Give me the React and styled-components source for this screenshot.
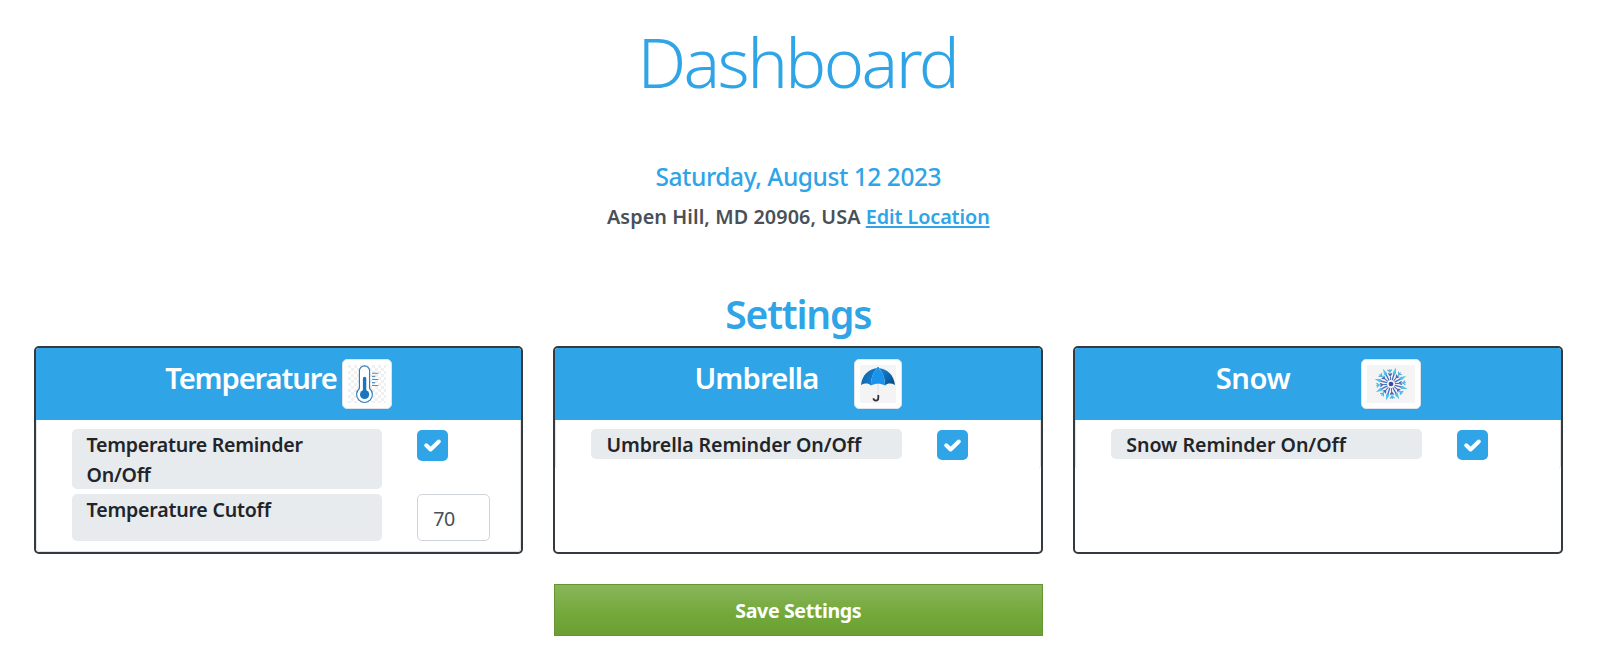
import React, { useState } from "react";
import styled, { createGlobalStyle } from "styled-components";

const blue = "#2fa4e7";

const GlobalStyle = createGlobalStyle`
  *, *::before, *::after { box-sizing: border-box; }
  body {
    margin: 0;
    background: #fff;
    color: #212529;
    font-family: "Noto Sans", "Open Sans", sans-serif;
    overflow: hidden;
  }
`;

const Page = styled.main`
  padding: 20px 58px 0 33.6px;
`;

const PageHeader = styled.header`
  display: flex;
  flex-direction: column;
  align-items: center;
`;

const Title = styled.h1`
  margin: 0 2px 58px 0;
  color: ${blue};
  font-size: 68.5px;
  font-weight: 300;
  line-height: 84px;
  letter-spacing: -2.6px;
`;

const DateLine = styled.h4`
  margin: 0 0 10px;
  color: ${blue};
  font-size: 24.5px;
  font-weight: 520;
  line-height: 30px;
  letter-spacing: -0.45px;
`;

const Location = styled.p`
  margin: 0 0 58px;
  color: #495057;
  font-size: 19.8px;
  font-weight: 650;
  line-height: 30px;
  letter-spacing: 0.09px;
`;

const EditLink = styled.a`
  color: ${blue};
  letter-spacing: -0.1px;
  text-decoration: underline;
  text-decoration-thickness: 2px;
  text-underline-offset: 2px;
`;

const SectionTitle = styled.h2`
  margin: 0 0 8px;
  color: ${blue};
  font-size: 39px;
  font-weight: 570;
  line-height: 48px;
  letter-spacing: -1.2px;
`;

const CardGrid = styled.section`
  display: grid;
  grid-template-columns: repeat(3, 1fr);
  gap: 30px;
`;

const Card = styled.article`
  height: 208px;
  border: 2px solid #343a40;
  border-radius: 5px;
  overflow: hidden;
`;

const CardHeader = styled.header`
  display: flex;
  align-items: flex-start;
  height: 72px;
  padding: 11px 0 0 ${(p) => p.$inset}px;
  background: ${blue};
`;

const CardTitle = styled.h3`
  width: ${(p) => p.$width}px;
  margin: 1px 0 0;
  color: #fff;
  font-size: 29.2px;
  font-weight: 600;
  line-height: 37px;
  letter-spacing: ${(p) => p.$tracking}px;
  white-space: nowrap;
`;

const Thumbnail = styled.figure`
  margin: 0;
  padding: 5px;
  border: 1px solid #dee2e6;
  border-radius: 5px;
  background: #fff;

  svg { display: block; }
`;

const CardBody = styled.div`
  display: grid;
  row-gap: 5px;
  padding: 9px 0 ${(p) => (p.$tall ? 10 : 9)}px 35px;
  border: 1px solid #e3e5e7;
  border-top: 0;
  border-bottom-color: ${(p) => (p.$tall ? "#dfe1e3" : "#fff")};
  border-radius: 0 0 5px 5px;
`;

const SettingRow = styled.div`
  display: grid;
  grid-template-columns: 310.4px auto;
  justify-content: start;
  column-gap: 35.2px;
`;

const Label = styled.label`
  padding: 1px 14px 0 15px;
  height: ${(p) => p.$height}px;
  border-radius: 5px;
  background: #e7ebee;
  font-size: 19.6px;
  font-weight: 650;
  line-height: 30px;
  letter-spacing: ${(p) => p.$tracking}px;
`;

const CheckBox = styled.button`
  display: grid;
  place-items: center;
  width: 31px;
  height: ${(p) => p.$height}px;
  margin-top: 1px;
  padding: 0;
  border: 0;
  border-radius: 5px;
  background: ${blue};
`;

const NumberInput = styled.input`
  width: 73px;
  height: 47px;
  padding: 1px 15px 0;
  border: 1px solid #ced4da;
  border-radius: 5px;
  color: #495057;
  font: 400 19.6px "Noto Sans", sans-serif;
  letter-spacing: -0.4px;
`;

const Actions = styled.footer`
  display: flex;
  justify-content: center;
  margin-top: 30px;
`;

const SaveButton = styled.button`
  width: 489px;
  height: 52px;
  padding: 1px 0 0;
  border: 1px solid #669533;
  background: linear-gradient(#88b65a, #73a839 60%, #6a9e35);
  color: #fff;
  font: 700 19.6px "Noto Sans", sans-serif;
  letter-spacing: -0.38px;
`;

function Thermometer() {
  return (
    <svg width="38" height="38" viewBox="0 0 38 38">
      <defs>
        <pattern id="checks" width="6" height="6" patternUnits="userSpaceOnUse">
          <path d="M0 0h3v3H0zM3 3h3v3H3z" fill="#f0f0f0" />
        </pattern>
      </defs>
      <rect width="38" height="38" fill="url(#checks)" />
      <path
        d="M11.4 23.5V6a5.1 5.1 0 0 1 10.2 0v17.5a7.9 7.9 0 1 1-10.2 0z"
        fill="#fff" stroke="#2b79b5" strokeWidth="1.1"
      />
      <path d="M14.9 26V13.5a1.7 1.7 0 0 1 3.4 0V26z" fill="#1c75bc" />
      <circle cx="16.6" cy="29.5" r="4.6" fill="#1c75bc" />
      <path
        d="M24 8.3h6.2M24 11.4h3.2M24 14.5h6.2M24 17.6h3.2M24 20.5h6.2"
        stroke="#4d91c6" strokeWidth="1.1"
      />
    </svg>
  );
}

function UmbrellaPicture() {
  return (
    <svg width="36" height="38" viewBox="0 0 36 38">
      <defs>
        <linearGradient id="canopy" x1="0" y1="0" x2="1" y2="0.5">
          <stop offset="0" stopColor="#0c5c9c" />
          <stop offset="1" stopColor="#1683d6" />
        </linearGradient>
        <linearGradient id="canopySide" x1="0" y1="0" x2="1" y2="0.6">
          <stop offset="0" stopColor="#1b8ce0" />
          <stop offset="1" stopColor="#07518f" />
        </linearGradient>
      </defs>
      <rect width="36" height="38" fill="#f4f4f4" />
      <path d="M18 2v3" stroke="#4b5a66" strokeWidth="1.4" />
      <path d="M18 19v12" stroke="#dcdfe2" strokeWidth="1" />
      <path d="M1 20C2 10 9 3.5 18 3c-4.5 3.5-7 9-7 17.5C8 18 5.5 18 1 20z" fill="url(#canopy)" />
      <path d="M35 20C34 10 27 3.5 18 3c4.5 3.5 7 9 7 17.5C28 18 30.5 18 35 20z" fill="url(#canopySide)" />
      <path d="M11 20.5C11 12 13.5 6.5 18 3c4.5 3.5 7 9 7 17.5C20.5 18 15.5 18 11 20.5z" fill="#1993ec" />
      <path d="M18.3 30v3c0 3.4-4.8 3.4-4.8.2" fill="none" stroke="#303238" strokeWidth="1.8" />
    </svg>
  );
}

const longArms = [17, 62, 107, 152, 197, 242, 287, 332];
const shortArms = [-5, 40, 85, 130, 175, 220, 265, 310];

function SnowflakePicture() {
  return (
    <svg width="48" height="38" viewBox="0 0 48 38">
      <rect width="48" height="38" fill="#f4f4f4" />
      <g transform="translate(24 19)" fill="none" strokeLinecap="round">
        {longArms.map((angle) => (
          <g key={angle} transform={`rotate(${angle})`}>
            <path d="M-1.7-11.5L0-17.2 1.7-11.5 0-9z" fill="#55c0e8" />
            <path d="M0-4.5V-10" stroke="#456fc0" strokeWidth="1.3" />
          </g>
        ))}
        {shortArms.map((angle) => (
          <g key={angle} transform={`rotate(${angle})`}>
            <path d="M0-10V-14.5M-1.9-14L0-12 1.9-14" stroke="#55b4e0" strokeWidth="1.2" />
            <path d="M0-4.5V-10M-1.6-10.5L0-8 1.6-10.5" stroke="#4966b8" strokeWidth="1" />
          </g>
        ))}
        <circle r="2.3" fill="#3c45a0" />
      </g>
    </svg>
  );
}

function Toggle({ name, height = 31 }) {
  const [on, setOn] = useState(true);
  return (
    <CheckBox
      type="button" role="checkbox" aria-checked={on} aria-label={name}
      $height={height} onClick={() => setOn(!on)}
    >
      {on && (
        <svg width="19" height="15" viewBox="0 0 19 15">
          <path d="M3.2 7.3l4.4 4.2 8.2-8" fill="none" stroke="#fff" strokeWidth="4" strokeLinecap="round" strokeLinejoin="round" />
        </svg>
      )}
    </CheckBox>
  );
}

export default function App() {
  const [cutoff, setCutoff] = useState("70");
  return (
    <Page>
      <GlobalStyle />
      <PageHeader>
        <Title>Dashboard</Title>
        <DateLine>Saturday, August 12 2023</DateLine>
        <Location>
          Aspen Hill, MD 20906, USA <EditLink href="#">Edit Location</EditLink>
        </Location>
        <SectionTitle>Settings</SectionTitle>
      </PageHeader>
      <CardGrid>
        <Card>
          <CardHeader $inset={129.6}>
            <CardTitle $width={176.4} $tracking={-1.12}>Temperature</CardTitle>
            <Thumbnail><Thermometer /></Thumbnail>
          </CardHeader>
          <CardBody $tall>
            <SettingRow>
              <Label $height={60} $tracking={-0.28}>Temperature Reminder On/Off</Label>
              <Toggle name="Temperature Reminder" />
            </SettingRow>
            <SettingRow>
              <Label $height={47} $tracking={-0.22}>Temperature Cutoff</Label>
              <NumberInput value={cutoff} onChange={(e) => setCutoff(e.target.value)} />
            </SettingRow>
          </CardBody>
        </Card>
        <Card>
          <CardHeader $inset={139}>
            <CardTitle $width={160} $tracking={-0.85}>Umbrella</CardTitle>
            <Thumbnail><UmbrellaPicture /></Thumbnail>
          </CardHeader>
          <CardBody>
            <SettingRow>
              <Label $height={30} $tracking={-0.09}>Umbrella Reminder On/Off</Label>
              <Toggle name="Umbrella Reminder" height={30} />
            </SettingRow>
          </CardBody>
        </Card>
        <Card>
          <CardHeader $inset={140.5}>
            <CardTitle $width={145.5} $tracking={-0.4}>Snow</CardTitle>
            <Thumbnail><SnowflakePicture /></Thumbnail>
          </CardHeader>
          <CardBody>
            <SettingRow>
              <Label $height={30} $tracking={-0.02}>Snow Reminder On/Off</Label>
              <Toggle name="Snow Reminder" height={30} />
            </SettingRow>
          </CardBody>
        </Card>
      </CardGrid>
      <Actions>
        <SaveButton type="button">Save Settings</SaveButton>
      </Actions>
    </Page>
  );
}
